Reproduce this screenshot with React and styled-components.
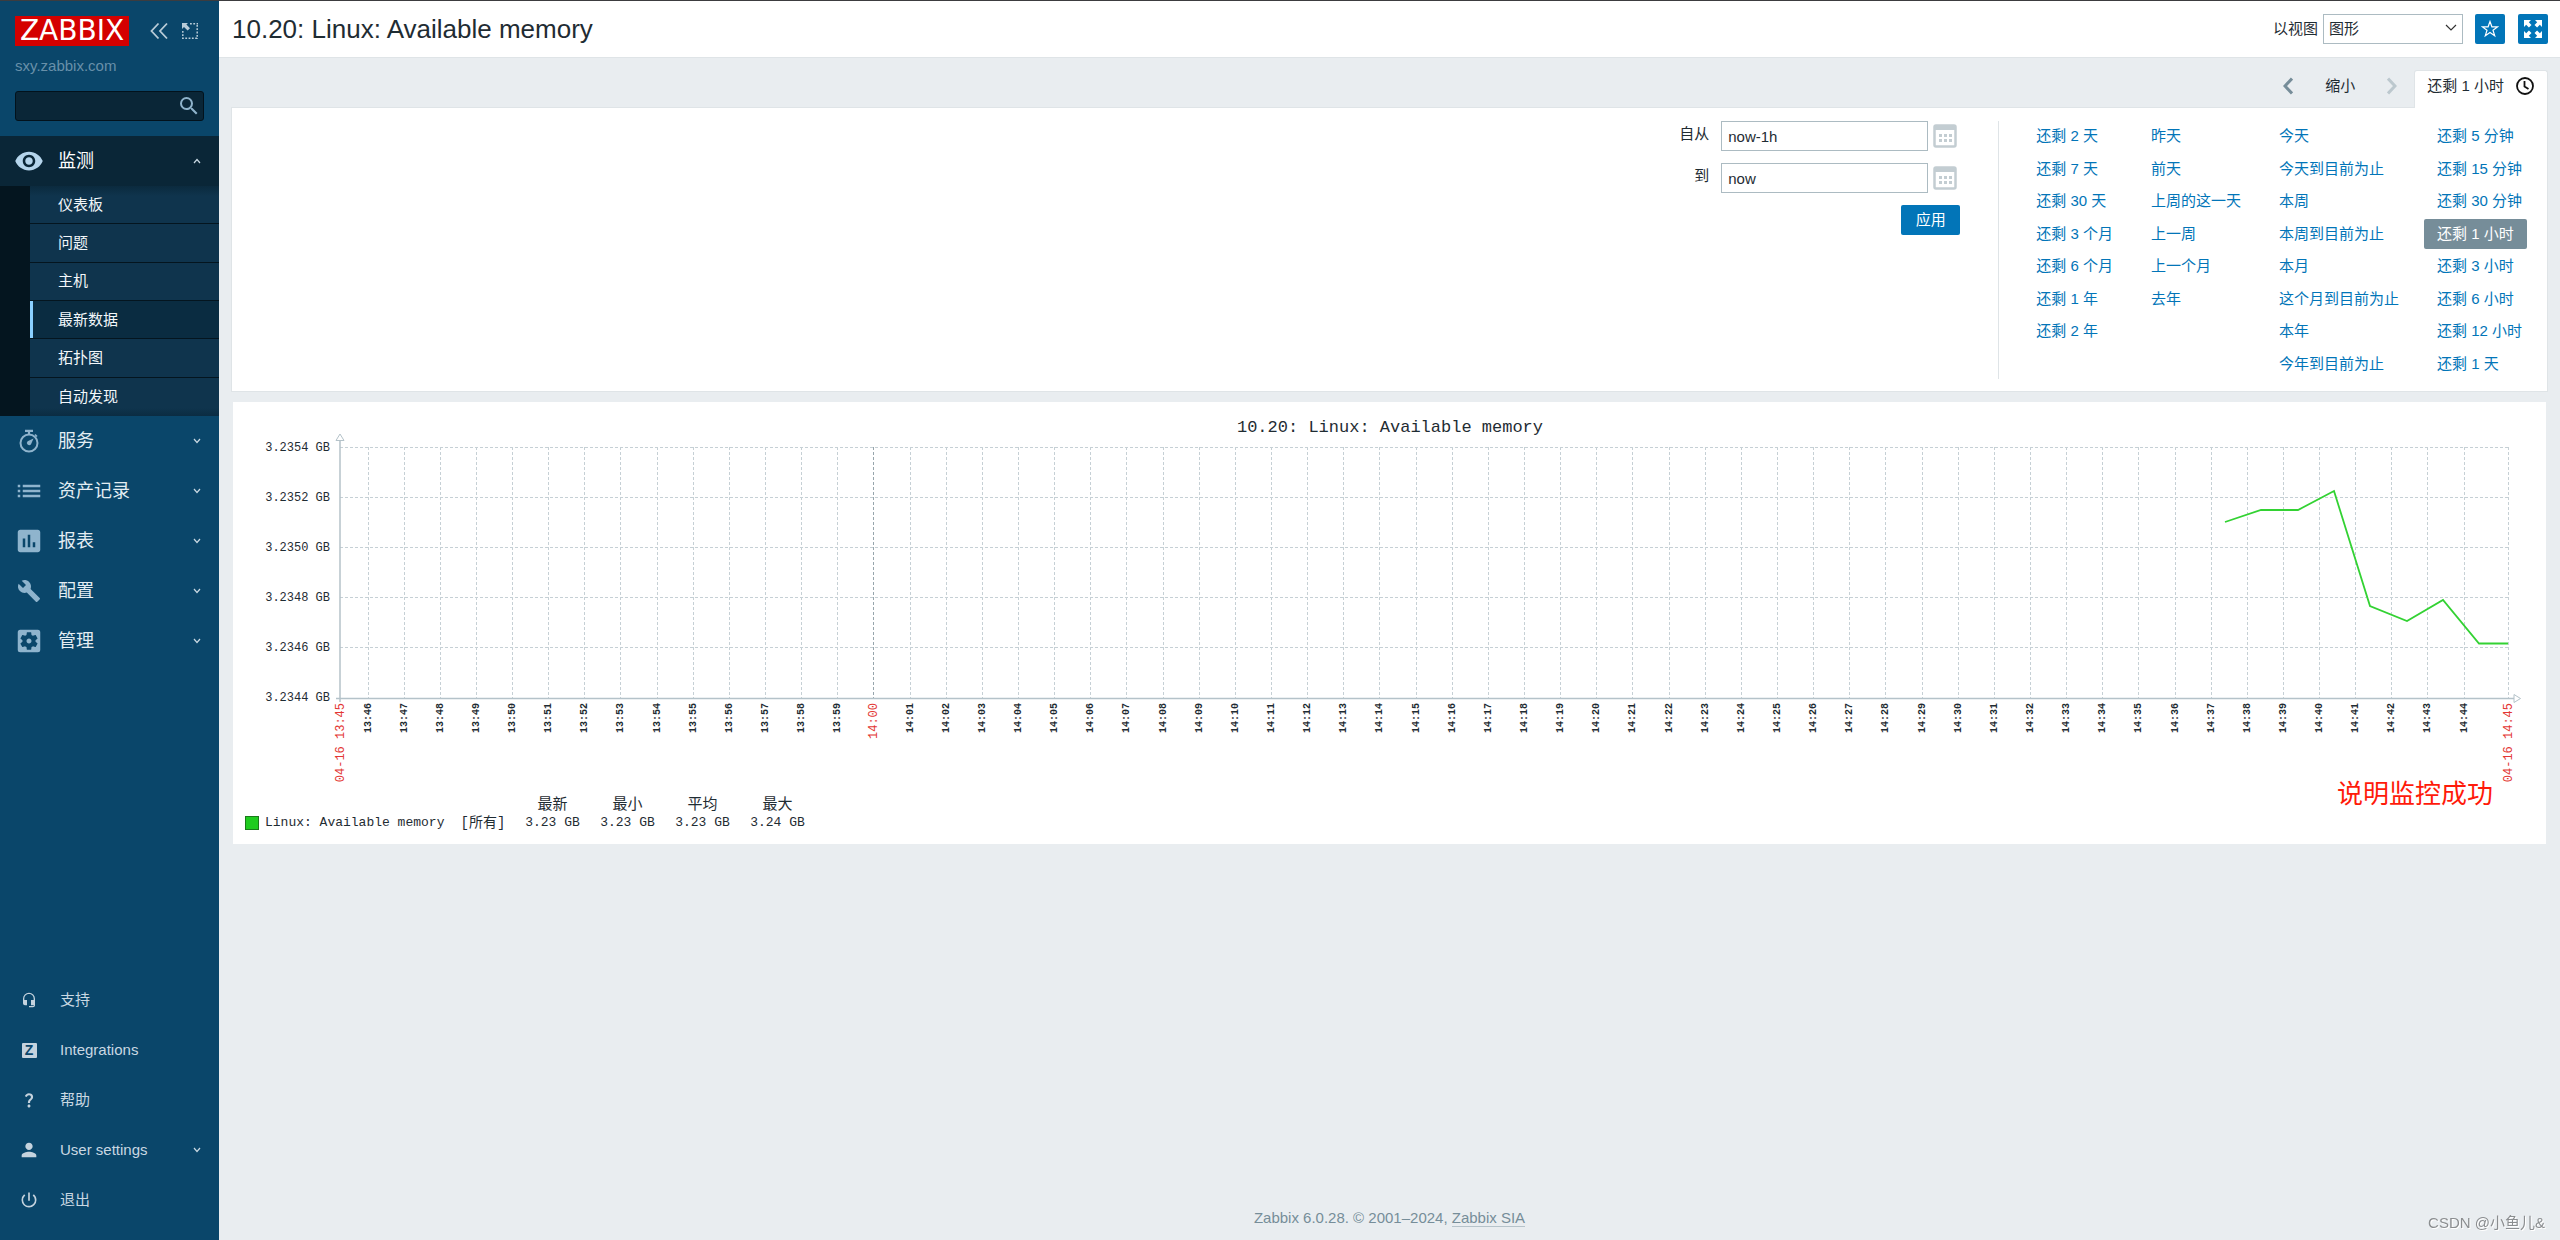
import React, { useState } from "react";
import styled, { createGlobalStyle } from "styled-components";
import {
  MdVisibility,
  MdList,
  MdInsertChart,
  MdBuild,
  MdSettingsApplications,
  MdSearch,
  MdHeadsetMic,
  MdQuestionMark,
  MdPerson,
  MdPowerSettingsNew,
} from "react-icons/md";

const GlobalStyle = createGlobalStyle`
  * {
    box-sizing: border-box;
  }

  body {
    margin: 0;
    background-color: #e9edf0;
    color: #1f2c33;
    font-family: "Liberation Sans", "Noto Sans CJK SC", sans-serif;
    font-size: 15px;
    line-height: 20px;
  }

  button,
  input,
  select {
    font: inherit;
    color: inherit;
  }

  button {
    padding: 0;
    border: 0;
    background: none;
    cursor: pointer;
  }

  a {
    color: inherit;
    text-decoration: none;
  }

  svg {
    display: block;
    flex-shrink: 0;
  }
`;

const Page = styled.div`
  display: flex;
  min-height: 100vh;
  border-top: 1px solid #3c3c3f;
`;

/* sidebar */

const Sidebar = styled.aside`
  display: flex;
  flex-direction: column;
  flex-shrink: 0;
  width: 219px;
  padding: 15px 0;
  background-color: #0a466a;
`;

const SidebarHead = styled.div`
  display: flex;
  align-items: center;
  padding: 0 15px;
`;

const Logo = styled.a`
  flex-shrink: 0;
  width: 114px;
  margin-right: 20px;
  background-color: #d40000;
  color: #fff;
  font-family: "DejaVu Sans", sans-serif;
  font-size: 28px;
  line-height: 30px;
  text-align: center;
`;

const HeadButton = styled.button`
  color: #b9ccd8;

  & + & {
    margin-left: 12px;
  }
`;

const ServerName = styled.div`
  margin: 10px 15px 15px;
  color: #6890a9;
`;

const SearchForm = styled.form`
  display: flex;
  align-items: center;
  height: 30px;
  margin: 0 15px 15px;
  padding-right: 2px;
  border: 1px solid #02121c;
  border-radius: 3px;
  background-color: #0a2637;
`;

const SearchInput = styled.input`
  flex: 1;
  min-width: 0;
  padding: 0 5px;
  border: 0;
  outline: 0;
  background: none;
  color: #fff;
`;

const SearchButton = styled.button`
  color: #8fb3cb;
`;

const Menu = styled.ul`
  margin: ${(props) => (props.$bottom ? "auto 0 0" : "0")};
  padding: 0;
  list-style: none;
`;

const MenuLink = styled.a`
  display: flex;
  align-items: center;
  height: 50px;
  padding-right: 18px;
  background-color: ${(props) => (props.$open ? "#0a2637" : "transparent")};
  color: ${(props) => (props.$small ? "#c9d8e2" : props.$open ? "#fff" : "#e3edf3")};
  font-size: ${(props) => (props.$small ? "15px" : "18px")};
`;

const MenuIcon = styled.span`
  display: flex;
  justify-content: center;
  width: 58px;
  color: ${(props) => (props.$small ? "#c5d3de" : props.$open ? "#b5d5ec" : "#8fb4cd")};
`;

const MenuLabel = styled.span`
  flex: 1;
  padding-left: ${(props) => (props.$small ? "2px" : "0")};
`;

const SubMenu = styled.ul`
  display: grid;
  grid-template-rows: repeat(6, 1fr);
  height: 230px;
  margin: 0;
  padding: 0 0 0 30px;
  list-style: none;
  background-color: #04151f;
`;

const SubItem = styled.li`
  display: flex;
  border-bottom: 1px solid #04151f;
  background-color: #0f344d;

  &:first-child {
    background-image: linear-gradient(#0b2a3e, #0f344d 10px);
  }

  &:last-child {
    border-bottom: 0;
    background-image: linear-gradient(#0f344d 30px, #0b2c42);
  }
`;

const SubLink = styled.a`
  display: flex;
  flex: 1;
  align-items: center;
  padding-left: 25px;
  border-left: 3px solid ${(props) => (props.$selected ? "#8ad0ff" : "transparent")};
  background-color: ${(props) => (props.$selected ? "#0a2c41" : "transparent")};
  color: #f2f7fa;
`;

const ZBadge = styled.span`
  width: 15px;
  border-radius: 1px;
  background-color: #c5d3de;
  color: #0a466a;
  font-size: 14px;
  font-weight: bold;
  line-height: 15px;
  text-align: center;
`;

/* page content */

const Main = styled.main`
  display: flex;
  flex: 1;
  flex-direction: column;
  min-width: 0;
`;

const Header = styled.header`
  display: flex;
  align-items: center;
  height: 57px;
  padding: 0 12px 0 13px;
  border-bottom: 1px solid #dfe4e7;
  background-color: #fff;
`;

const Title = styled.h1`
  flex: 1;
  margin: 0;
  font-size: 26px;
  font-weight: normal;
  line-height: 30px;
`;

const SelectBox = styled.div`
  position: relative;
  margin: 0 12px 0 5px;

  svg {
    position: absolute;
    top: 10px;
    right: 6px;
    pointer-events: none;
  }
`;

const Select = styled.select`
  display: block;
  width: 140px;
  height: 30px;
  padding: 0 5px;
  border: 1px solid #acbbc2;
  border-radius: 0;
  background-color: #fff;
  appearance: none;
`;

const IconButton = styled.button`
  display: flex;
  align-items: center;
  justify-content: center;
  width: 30px;
  height: 30px;
  border-radius: 2px;
  background-color: #0275b8;
  color: #fff;

  & + & {
    margin-left: 13px;
  }
`;

const Content = styled.div`
  padding: 12px 12px 0;
`;

const TimeNav = styled.nav`
  display: flex;
  justify-content: flex-end;
`;

const NavButton = styled.button`
  display: flex;
  align-items: center;
  height: 32px;
  margin-right: ${(props) => (props.$last ? "17px" : "32px")};
  color: ${(props) => props.$color || "inherit"};
`;

const TimeTab = styled.a`
  position: relative;
  display: flex;
  gap: 12px;
  align-items: center;
  height: 38px;
  margin-bottom: -1px;
  padding: 0 13px 8px 12px;
  border: 1px solid #dfe4e7;
  border-bottom: 0;
  border-radius: 3px 3px 0 0;
  background-color: #fff;
`;

const FilterPanel = styled.section`
  display: flex;
  justify-content: flex-end;
  padding: 13px 12px 12px;
  border: 1px solid #dfe4e7;
  background-color: #fff;
`;

const RangeForm = styled.form`
  display: flex;
  flex-direction: column;
  gap: 12px;
  align-items: flex-end;
  padding-right: 38px;
  border-right: 1px solid #dfe4e7;
`;

const Field = styled.div`
  display: flex;
  align-items: center;
`;

const FieldLabel = styled.label`
  margin-right: 12px;
  padding-bottom: 4px;
`;

const FieldInput = styled.input`
  width: 207px;
  height: 30px;
  margin-right: 5px;
  padding: 0 6px;
  border: 1px solid #acbbc2;
`;

const CalendarButton = styled.button`
  width: 27px;
`;

const ApplyButton = styled.button`
  width: 59px;
  height: 30px;
  border-radius: 2px;
  background-color: #0275b8;
  color: #fff;
`;

const Ranges = styled.div`
  display: grid;
  grid-auto-flow: column;
  grid-template-rows: repeat(8, 30px);
  column-gap: 12px;
  align-content: space-between;
  justify-items: start;
  height: 258px;
  margin-left: 24px;
`;

const RangeLink = styled.a`
  grid-row: ${(props) => props.$row};
  grid-column: ${(props) => props.$col};
  padding: 0 13px;
  border-radius: 2px;
  background-color: ${(props) => (props.$selected ? "#768d99" : "transparent")};
  color: ${(props) => (props.$selected ? "#fff" : "#0275b8")};
  line-height: 30px;
  white-space: nowrap;
`;

const GraphPanel = styled.section`
  position: relative;
  margin: 10px 2px 0;
  padding-bottom: 13px;
  background-color: #fff;
`;

const ChartSvg = styled.svg`
  width: 100%;
  height: auto;
  font-family: "Liberation Mono", "Noto Sans CJK SC", monospace;
`;

const Legend = styled.table`
  margin: 7px 0 0 12px;
  border-collapse: collapse;
  font-family: "Liberation Mono", "Noto Sans CJK SC", monospace;
  font-size: 13px;
  line-height: 18px;
`;

const LegendHead = styled.th`
  width: ${(props) => props.$width}px;
  padding: 0;
  font-size: 15px;
  font-weight: normal;
`;

const LegendCell = styled.td`
  padding: 0;
  font-size: ${(props) => (props.$large ? "14px" : "13px")};
  line-height: 16px;
  text-align: center;
`;

const LegendName = styled.div`
  display: flex;
  gap: 6px;
  align-items: center;
`;

const Swatch = styled.span`
  width: 14px;
  height: 14px;
  border: 1px solid #1a7a1a;
  background-color: #1fcc1f;
`;

const Note = styled.p`
  position: absolute;
  right: 53px;
  bottom: 35px;
  margin: 0;
  color: #ff1a0a;
  font-size: 26px;
  line-height: 30px;
`;

const Footer = styled.footer`
  margin-top: auto;
  padding-bottom: 12px;
  color: #768d99;
  text-align: center;

  a {
    border-bottom: 1px solid #b6c3ca;
  }
`;

const Watermark = styled.div`
  position: fixed;
  right: 15px;
  bottom: 7px;
  color: #8b8e90;
  text-shadow: 1px 1px 0 #fff;
`;

/* icons */

const Chevron = ({ up }) => (
  <svg width="8" height="6" viewBox="0 0 8 6" fill="none" stroke="#c9d8e2" strokeWidth="1.2">
    <path d={up ? "M1 5l3-3.5L7 5" : "M1 1l3 3.5L7 1"} />
  </svg>
);

const CollapseIcon = () => (
  <svg width="20" height="18" viewBox="0 0 20 18" fill="none" stroke="currentColor" strokeWidth="1.8">
    <path d="M9.5 1.5L2.5 9l7 7.5M18 1.5L11 9l7 7.5" />
  </svg>
);

const KioskIcon = () => (
  <svg width="18" height="18" viewBox="0 0 18 18" fill="none" stroke="currentColor" strokeWidth="1.5">
    <path d="M9 1.8h8M16.2 3v14M1.8 9v8M1 16.2h16" strokeDasharray="1.8 1.5" />
    <path d="M1 1h6L5.4 2.6 9 6.2 6.6 8.5 3 5 1 7z" fill="currentColor" stroke="none" />
  </svg>
);

const StopwatchIcon = () => (
  <svg width="24" height="24" viewBox="0 0 24 24" fill="none" stroke="currentColor">
    <circle cx="12" cy="14" r="8.5" strokeWidth="2" />
    <path d="M8 1.8h8M12 2v4" strokeWidth="2.2" />
    <path d="M18 5.5l2 2" strokeWidth="1.6" />
    <path d="M16.5 9.5l-2.6 6a2.3 2.3 0 1 1-3.3-3.3z" fill="currentColor" stroke="none" />
  </svg>
);

const StarIcon = () => (
  <svg width="18" height="18" viewBox="0 0 18 18" fill="none" stroke="currentColor" strokeWidth="1.2">
    <path d="M9 1.5l1.9 5.3 5.6.1-4.5 3.4 1.7 5.5L9 12.6l-4.7 3.2L6 10.3 1.5 6.900l5.600-.1z" />
  </svg>
);

const FullscreenIcon = () => (
  <svg width="18" height="18" viewBox="0 0 18 18" fill="currentColor">
    <path d="M0 0h7L4.8 2.2l2.7 2.7-2.6 2.6-2.7-2.7L0 7z" />
    <path d="M18 0v7l-2.2-2.2-2.7 2.7-2.6-2.6 2.7-2.7L11 0z" />
    <path d="M0 18v-7l2.2 2.2 2.7-2.7 2.6 2.6-2.7 2.7L7 18z" />
    <path d="M18 18h-7l2.2-2.2-2.7-2.7 2.6-2.6 2.7 2.7L18 11z" />
  </svg>
);

const ArrowIcon = ({ right }) => (
  <svg width="10" height="18" viewBox="0 0 10 18" fill="none" stroke="currentColor" strokeWidth="3">
    <path d={right ? "M1 1.5L8 9l-7 7.5" : "M9 1.5L2 9l7 7.5"} />
  </svg>
);

const ClockIcon = () => (
  <svg width="18" height="18" viewBox="0 0 18 18" fill="none" stroke="#111" strokeWidth="1.8">
    <circle cx="9" cy="9" r="8" />
    <path d="M8.5 4v5.5l4 2.5" />
  </svg>
);

const CalendarIcon = () => (
  <svg width="24" height="24" viewBox="0 0 24 24">
    <rect x="1.5" y="1.5" width="21" height="21" rx="1.5" fill="#fff" stroke="#c3cdd2" strokeWidth="2.5" />
    <path d="M1 1h22v5H1z" fill="#c3cdd2" />
    {[6, 11, 16].map((x) => (
      <path key={x} d={`M${x} 10h3v3h-3zM${x} 15h3v3h-3z`} fill="#c3cdd2" />
    ))}
  </svg>
);

/* data */

const subItems = ["仪表板", "问题", "主机", "最新数据", "拓扑图", "自动发现"];

const mainItems = [
  { label: "服务", icon: <StopwatchIcon /> },
  { label: "资产记录", icon: <MdList size={30} /> },
  { label: "报表", icon: <MdInsertChart size={30} /> },
  { label: "配置", icon: <MdBuild size={24} /> },
  { label: "管理", icon: <MdSettingsApplications size={30} /> },
];

const bottomItems = [
  { label: "支持", icon: <MdHeadsetMic size={16} /> },
  { label: "Integrations", icon: <ZBadge>Z</ZBadge> },
  { label: "帮助", icon: <MdQuestionMark size={18} /> },
  { label: "User settings", icon: <MdPerson size={22} />, more: true },
  { label: "退出", icon: <MdPowerSettingsNew size={20} /> },
];

const ranges = [
  ["还剩 2 天", "还剩 7 天", "还剩 30 天", "还剩 3 个月", "还剩 6 个月", "还剩 1 年", "还剩 2 年"],
  ["昨天", "前天", "上周的这一天", "上一周", "上一个月", "去年"],
  ["今天", "今天到目前为止", "本周", "本周到目前为止", "本月", "这个月到目前为止", "本年", "今年到目前为止"],
  ["还剩 5 分钟", "还剩 15 分钟", "还剩 30 分钟", "还剩 1 小时", "还剩 3 小时", "还剩 6 小时", "还剩 12 小时", "还剩 1 天"],
];

const yLabels = ["3.2354 GB", "3.2352 GB", "3.2350 GB", "3.2348 GB", "3.2346 GB", "3.2344 GB"];

// one tick per minute, 13:46 to 14:44
const ticks = Array.from({ length: 59 }, (_, i) => {
  const minutes = 13 * 60 + 46 + i;
  const hour = Math.floor(minutes / 60);
  const minute = String(minutes % 60).padStart(2, "0");
  return { x: Math.round(134.5 + i * 36.14), label: `${hour}:${minute}`, full: minutes % 60 === 0 };
});

const series = [
  [1992, 120],
  [2028, 108],
  [2065, 108],
  [2101, 89],
  [2137, 204],
  [2174, 219],
  [2210, 198],
  [2246, 241.5],
  [2275, 241.5],
];

const stats = [
  ["最新", "3.23 GB"],
  ["最小", "3.23 GB"],
  ["平均", "3.23 GB"],
  ["最大", "3.24 GB"],
];

const TimeLabel = ({ x, red, children }) => (
  <text
    transform={`translate(${x} 301) rotate(-90)`}
    textAnchor="end"
    fontSize={red ? 12 : 10}
    fontWeight={red ? "normal" : "bold"}
    fill={red ? "#e33734" : "#1f2c33"}
    xmlSpace="preserve"
  >
    {children}
  </text>
);

const Chart = () => (
  <ChartSvg viewBox="0 0 2313 388" role="img" aria-label="10.20: Linux: Available memory">
    <text x="1157" y="30" fontSize="17" textAnchor="middle" fill="#1f2c33">
      10.20: Linux: Available memory
    </text>

    {yLabels.map((label, i) => (
      <text key={label} x="97" y={49 + i * 50} fontSize="12" textAnchor="end" fill="#1f2c33">
        {label}
      </text>
    ))}

    <g stroke="#c6d0d5" strokeDasharray="3 2">
      {[0, 1, 2, 3, 4].map((i) => (
        <path key={i} d={`M107 ${45.5 + i * 50}H2275`} />
      ))}
      {ticks.map((tick) => (
        <path key={tick.label} d={`M${tick.x + 0.5} 45V296`} stroke={tick.full ? "#97a5ac" : "#c6d0d5"} />
      ))}
      <path d="M2275.5 45V296" />
    </g>

    <g fill="#fff" stroke="#b4c2c9">
      <path d="M107 39V300" strokeWidth="1.5" />
      <path d="M103 296.5H2281" strokeWidth="1.5" />
      <path d="M103 38.5h8l-4-6.5z" />
      <path d="M2281 292.5v8l6.5-4z" />
    </g>

    <polyline points={series.join(" ")} fill="none" stroke="#33d233" strokeWidth="1.8" />

    <TimeLabel x={111} red>04-16 13:45</TimeLabel>
    {ticks.map((tick) => (
      <TimeLabel key={tick.label} x={tick.full ? tick.x + 4 : tick.x + 3} red={tick.full}>
        {tick.label}
      </TimeLabel>
    ))}
    <TimeLabel x={2279} red>04-16 14:45</TimeLabel>
  </ChartSvg>
);

const SideNav = () => (
  <Sidebar>
    <SidebarHead>
      <Logo href="#">ZABBIX</Logo>
      <HeadButton aria-label="Collapse sidebar"><CollapseIcon /></HeadButton>
      <HeadButton aria-label="Hide sidebar"><KioskIcon /></HeadButton>
    </SidebarHead>
    <ServerName>sxy.zabbix.com</ServerName>
    <SearchForm role="search" onSubmit={(e) => e.preventDefault()}>
      <SearchInput type="text" aria-label="Search" />
      <SearchButton aria-label="Search"><MdSearch size={24} /></SearchButton>
    </SearchForm>

    <Menu>
      <li>
        <MenuLink href="#" $open>
          <MenuIcon $open><MdVisibility size={30} /></MenuIcon>
          <MenuLabel>监测</MenuLabel>
          <Chevron up />
        </MenuLink>
        <SubMenu>
          {subItems.map((item) => (
            <SubItem key={item}>
              <SubLink href="#" $selected={item === "最新数据"}>{item}</SubLink>
            </SubItem>
          ))}
        </SubMenu>
      </li>
      {mainItems.map((item) => (
        <li key={item.label}>
          <MenuLink href="#">
            <MenuIcon>{item.icon}</MenuIcon>
            <MenuLabel>{item.label}</MenuLabel>
            <Chevron />
          </MenuLink>
        </li>
      ))}
    </Menu>

    <Menu $bottom>
      {bottomItems.map((item) => (
        <li key={item.label}>
          <MenuLink href="#" $small>
            <MenuIcon $small>{item.icon}</MenuIcon>
            <MenuLabel $small>{item.label}</MenuLabel>
            {item.more && <Chevron />}
          </MenuLink>
        </li>
      ))}
    </Menu>
  </Sidebar>
);

const App = () => {
  const [from, setFrom] = useState("now-1h");
  const [to, setTo] = useState("now");
  const [range, setRange] = useState("还剩 1 小时");

  return (
    <Page>
      <GlobalStyle />
      <SideNav />
      <Main>
        <Header>
          <Title>10.20: Linux: Available memory</Title>
          <label htmlFor="view-as">以视图</label>
          <SelectBox>
            <Select id="view-as" defaultValue="graph">
              <option value="graph">图形</option>
            </Select>
            <svg width="12" height="8" viewBox="0 0 12 8" fill="none" stroke="#333" strokeWidth="1.2">
              <path d="M1 1l5 5 5-5" />
            </svg>
          </SelectBox>
          <IconButton aria-label="Add to favorites"><StarIcon /></IconButton>
          <IconButton aria-label="Kiosk mode"><FullscreenIcon /></IconButton>
        </Header>

        <Content>
          <TimeNav>
            <NavButton $color="#768d99" aria-label="Previous"><ArrowIcon /></NavButton>
            <NavButton>缩小</NavButton>
            <NavButton $last $color="#bcc8ce" aria-label="Next"><ArrowIcon right /></NavButton>
            <TimeTab href="#">
              {range}
              <ClockIcon />
            </TimeTab>
          </TimeNav>

          <FilterPanel>
            <RangeForm onSubmit={(e) => e.preventDefault()}>
              <Field>
                <FieldLabel htmlFor="from">自从</FieldLabel>
                <FieldInput id="from" value={from} onChange={(e) => setFrom(e.target.value)} />
                <CalendarButton type="button" aria-label="Pick start"><CalendarIcon /></CalendarButton>
              </Field>
              <Field>
                <FieldLabel htmlFor="to">到</FieldLabel>
                <FieldInput id="to" value={to} onChange={(e) => setTo(e.target.value)} />
                <CalendarButton type="button" aria-label="Pick end"><CalendarIcon /></CalendarButton>
              </Field>
              <ApplyButton>应用</ApplyButton>
            </RangeForm>
            <Ranges>
              {ranges.map((column, col) =>
                column.map((item, row) => (
                  <RangeLink
                    key={item}
                    href="#"
                    $col={col + 1}
                    $row={row + 1}
                    $selected={item === range}
                    onClick={() => setRange(item)}
                  >
                    {item}
                  </RangeLink>
                ))
              )}
            </Ranges>
          </FilterPanel>

          <GraphPanel>
            <Chart />
            <Legend>
              <thead>
                <tr>
                  <LegendHead $width={206} />
                  <LegendHead $width={64} />
                  {stats.map(([name]) => (
                    <LegendHead key={name} $width={75} scope="col">{name}</LegendHead>
                  ))}
                </tr>
              </thead>
              <tbody>
                <tr>
                  <LegendCell>
                    <LegendName>
                      <Swatch />
                      Linux: Available memory
                    </LegendName>
                  </LegendCell>
                  <LegendCell $large>[所有]</LegendCell>
                  {stats.map(([name, value]) => (
                    <LegendCell key={name}>{value}</LegendCell>
                  ))}
                </tr>
              </tbody>
            </Legend>
            <Note>说明监控成功</Note>
          </GraphPanel>
        </Content>

        <Footer>
          Zabbix 6.0.28. © 2001–2024, <a href="#">Zabbix SIA</a>
        </Footer>
      </Main>
      <Watermark>CSDN @小鱼儿&amp;</Watermark>
    </Page>
  );
};

export default App;
